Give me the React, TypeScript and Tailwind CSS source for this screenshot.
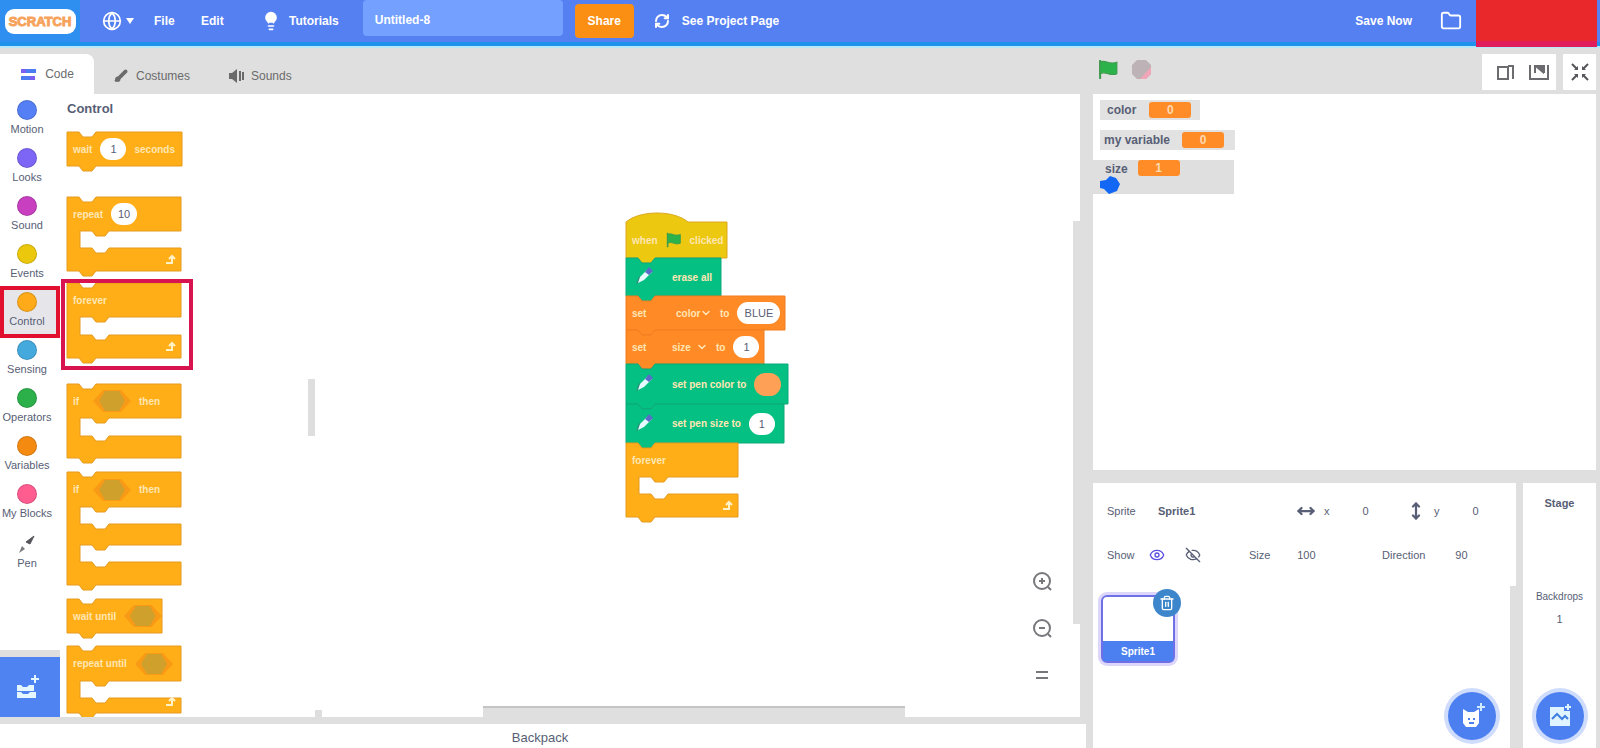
import type { ReactNode } from 'react';
import { ChevronDown, Eye, EyeOff, Folder, Globe, Lightbulb, Brush, Trash2, RefreshCw, MoveHorizontal, MoveVertical } from 'lucide-react';

const categories = [
  { name: 'Motion', color: 'bg-[#5580f5]' },
  { name: 'Looks', color: 'bg-[#7d66f5]' },
  { name: 'Sound', color: 'bg-[#c840c0]' },
  { name: 'Events', color: 'bg-[#ecc80c]' },
  { name: 'Control', color: 'bg-[#ffab19]' },
  { name: 'Sensing', color: 'bg-[#44a9dc]' },
  { name: 'Operators', color: 'bg-[#2cb04a]' },
  { name: 'Variables', color: 'bg-[#f58a10]' },
  { name: 'My Blocks', color: 'bg-[#ff5c90]' },
];

type Tone = 'control' | 'event' | 'data' | 'pen';

const tones: Record<Tone, { fill: string; edge: string }> = {
  control: { fill: '#ffae17', edge: '#e59a20' },
  event: { fill: '#ecc810', edge: '#dba820' },
  data: { fill: '#ff8a26', edge: '#f07c20' },
  pen: { fill: '#04c183', edge: '#0da87a' },
};

interface BlockProps {
  tone: Tone;
  width: number;
  // alternating heights: bar, mouth, bar, mouth, bar
  rows: number[];
  hat?: boolean;
  loop?: boolean;
  children?: ReactNode;
}

const tab = (x: number) => `H${x + 17} l-4 5 h-9 l-4 -5 H${x}`;
const notch = (x: number) => `H${x} l4 5 h9 l4 -5`;

function blockPath(width: number, rows: number[], hat?: boolean) {
  let y = 0;
  let d = hat ? 'M0 0 C14 -12 48 -12 62 0' : `M0 0 ${notch(12)}`;
  d += ` H${width}`;
  rows.forEach((h, i) => {
    y += h;
    if (i % 2 === 0) {
      const last = i === rows.length - 1;
      d += ` V${y} ${last ? `${tab(12)} H0` : `${tab(25)} H13`}`;
    } else {
      d += ` V${y} ${notch(25)} H${width}`;
    }
  });
  return `${d} Z`;
}

function Block({ tone, width, rows, hat, loop, children }: BlockProps) {
  const height = rows.reduce((a, b) => a + b, 0);
  const { fill, edge } = tones[tone];
  return (
    <div className="relative text-[10px] font-bold text-[#ffe6b4]" style={{ width, height }}>
      <svg className="absolute inset-0 overflow-visible" width={width} height={height}>
        <path d={blockPath(width, rows, hat)} fill={fill} stroke={edge} />
        {loop && (
          <g transform={`translate(${width - 16} ${height - 16})`} stroke="#fff1c8" strokeWidth="2" fill="none">
            <path d="M1 8h6V2M4 4l3-3 3 3" />
          </g>
        )}
      </svg>
      <div className="relative flex items-center gap-2 whitespace-nowrap pl-[6px]" style={{ height: rows[0] }}>
        {children}
      </div>
    </div>
  );
}

function Slot({ value, label, wide }: { value: string; label: string; wide?: boolean }) {
  return (
    <input
      aria-label={label}
      defaultValue={value}
      className={`h-[22px] rounded-full bg-white text-center text-[11px] font-normal text-[#575e75] ${wide ? 'w-[43px]' : 'w-[26px]'}`}
    />
  );
}

function Hex() {
  return (
    <svg width="38" height="22" viewBox="0 0 38 22">
      <path d="M10 0h18l10 11-10 11H10L0 11z" fill="#f99a16" />
      <path d="M12 1h14l6 10-6 10H12L6 11z" fill="#cfa02c" />
    </svg>
  );
}

function VarSelect({ value }: { value: string }) {
  return (
    <span className="relative flex items-center">
      <select aria-label="variable" defaultValue={value} className="w-[40px] appearance-none bg-transparent pl-1 text-[10px] font-bold">
        <option>{value}</option>
      </select>
      <ChevronDown className="pointer-events-none absolute right-0 h-3 w-3" strokeWidth={3} />
    </span>
  );
}

function PenIcon() {
  return (
    <svg width="24" height="24" viewBox="0 0 24 24" className="mr-2">
      <path d="M4 19l3-8 4 4z" fill="#2e8f78" />
      <path d="M6 18l2-6 8-8 4 3-8 8z" fill="#e6fbff" />
      <path d="M13 7l4-5 4 4-4 4z" fill="#5a6cc8" />
    </svg>
  );
}

function Flag({ size }: { size: number }) {
  return (
    <svg width={size} height={size} viewBox="0 0 20 20">
      <path d="M2 1v18" stroke="#3f9a4e" strokeWidth="2" />
      <path d="M2 3c5-3 8 3 16 0v11c-7 3-10-3-16 0z" fill="#2bb24a" stroke="#3f9a4e" />
    </svg>
  );
}

function MenuBar() {
  return (
    <header className="relative z-10 flex h-[46px] shrink-0 items-center border-b-4 border-[#1f92ec] bg-[#5580f2] text-[12px] font-bold text-white">
      <a href="#home" aria-label="Home" className="flex h-full w-20 items-center justify-center bg-[#2f8ff0]">
        <svg width="76" height="30" viewBox="0 0 76 30">
          <rect x="3" y="3" width="71" height="25" rx="9" fill="#fff" />
          <text x="38" y="20" textAnchor="middle" fontSize="13" fontWeight="bold" fill="#f7a35c" stroke="#f7a35c" strokeWidth="1">SCRATCH</text>
        </svg>
      </a>
      <button aria-label="Language" className="ml-[22px] flex items-center gap-1">
        <Globe className="h-5 w-5" />
        <svg width="8" height="6"><path d="M0 0h8L4 6z" fill="#fff" /></svg>
      </button>
      <nav className="ml-5 flex items-center">
        <button className="w-[47px] text-left">File</button>
        <button className="w-[60px] text-left">Edit</button>
        <button className="flex items-center gap-2">
          <Lightbulb className="h-5 w-5" fill="#fff" />
          Tutorials
        </button>
      </nav>
      <input
        aria-label="Project title"
        defaultValue="Untitled-8"
        className="mb-1 ml-6 h-9 w-[200px] self-start rounded-sm bg-[#74a0ff] pl-3 pt-1"
      />
      <button className="ml-3 h-[34px] w-[59px] rounded-[4px] bg-[#fb8f14]">Share</button>
      <button className="ml-5 flex items-center gap-3">
        <RefreshCw className="h-4 w-4" strokeWidth={3} />
        See Project Page
      </button>
      <button className="ml-auto">Save Now</button>
      <button aria-label="My Stuff" className="ml-7 mr-[14px]">
        <Folder className="h-[22px] w-[22px]" />
      </button>
      <div className="mr-[3px] h-[47px] w-[121px] self-start border-b-[6px] border-[#e01c5c] bg-[#e8282a]" />
    </header>
  );
}

function Tabs() {
  return (
    <div className="flex h-[46px] shrink-0 items-end text-[12px] text-[#6b6b6b]">
      <button className="flex h-10 w-[94px] items-center justify-center gap-2 rounded-tr-lg bg-white">
        <svg width="17" height="13" viewBox="0 0 17 13">
          <path d="M4 3h12M1 10h12" stroke="#4c7df0" strokeWidth="4" />
          <path d="M1 3h5M10 10h5" stroke="#7a60f0" strokeWidth="4" />
        </svg>
        Code
      </button>
      <button className="flex h-9 w-[113px] items-center gap-2 pl-5">
        <Brush className="h-[14px] w-[14px]" fill="#6b6b6b" />
        Costumes
      </button>
      <button className="flex h-9 items-center gap-[6px] pl-[22px]">
        <svg width="16" height="16" viewBox="0 0 16 16">
          <path d="M0 5h3l5-4v14l-5-4H0z" fill="#6b6b6b" />
          <path d="M11 3v10M14 4v8" stroke="#6b6b6b" strokeWidth="2" />
        </svg>
        Sounds
      </button>
    </div>
  );
}

function CategoryMenu() {
  return (
    <div className="flex w-[60px] shrink-0 flex-col pt-[2px] text-[11px] text-[#575e75]">
      {categories.map(({ name, color }) => (
        <button
          key={name}
          className={`relative flex h-12 flex-col items-center gap-[2px] whitespace-nowrap pr-[6px] pt-1 leading-[14px] ${name === 'Control' ? 'bg-[#e6e6ea]' : ''}`}
        >
          <span className={`h-5 w-5 shrink-0 rounded-full border border-black/15 ${color}`} />
          {name}
          {name === 'Control' && <span className="absolute -bottom-[2px] -top-[2px] left-0 right-0 border-4 border-[#e0102e]" />}
        </button>
      ))}
      <button className="flex h-12 flex-col items-center pr-[6px] pt-1 leading-[14px]">
        <svg width="22" height="24" viewBox="0 0 22 24" className="shrink-0">
          <path d="M3 21l3-7 3 3z" fill="#7b7b80" />
          <path d="M10 10l8-6-4 8z" fill="#55555c" stroke="#55555c" />
        </svg>
        Pen
      </button>
      <button aria-label="Add Extension" className="mt-auto flex h-[67px] w-full items-center justify-center border-t-[7px] border-[#dfdfdf] bg-[#5083f2] pr-[6px]">
        <svg width="24" height="26" viewBox="0 0 24 26">
          <path d="M2 11h4l2 2h4l2-2h5v6H2z M2 18h4l2 2h5l2-2h6v6H2z" fill="#e4f6ff" />
          <path d="M20 1v8M16 5h8" stroke="#e4f6ff" strokeWidth="2" />
        </svg>
      </button>
    </div>
  );
}

function Palette() {
  return (
    <div className="relative flex w-[262px] shrink-0 flex-col overflow-hidden pl-[7px]">
      <h2 className="mb-[14px] mt-[6px] text-[13px] font-bold leading-[18px] text-[#575e75]">Control</h2>
      <Block tone="control" width={115} rows={[34]}>
        wait <Slot value="1" label="seconds" /> seconds
      </Block>
      <div className="mt-[31px]">
        <Block tone="control" width={114} rows={[34, 17, 23]} loop>
          repeat <Slot value="10" label="times" />
        </Block>
      </div>
      <div className="relative mt-3">
        <Block tone="control" width={114} rows={[34, 18, 23]} loop>forever</Block>
        <div className="absolute -bottom-3 -left-[6px] -top-1 w-[132px] border-4 border-[#d81450]" />
      </div>
      <div className="mt-[26px]">
        <Block tone="control" width={114} rows={[34, 18, 22]}>
          <span className="w-3">if</span> <Hex /> then
        </Block>
      </div>
      <div className="mt-[14px]">
        <Block tone="control" width={114} rows={[35, 17, 21, 17, 23]}>
          <span className="w-3">if</span> <Hex /> then
        </Block>
      </div>
      <div className="mt-[14px]">
        <Block tone="control" width={95} rows={[34]}>
          wait until <Hex />
        </Block>
      </div>
      <div className="mt-[13px]">
        <Block tone="control" width={114} rows={[35, 17, 15]} loop>
          repeat until <Hex />
        </Block>
      </div>
      <div className="absolute right-[7px] top-[285px] h-[57px] w-[7px] bg-[#dedede]" />
      <div className="absolute bottom-0 right-0 h-[7px] w-[7px] bg-[#dedede]" />
    </div>
  );
}

function ZoomButton({ label, children }: { label: string; children: ReactNode }) {
  return (
    <button aria-label={label} className="flex h-9 w-9 items-center justify-center rounded-full">
      <svg width="22" height="22" viewBox="0 0 22 22" fill="none" stroke="#77777c" strokeWidth="2">
        {children}
      </svg>
    </button>
  );
}

function Workspace() {
  return (
    <div className="relative min-w-0 flex-1">
      {/* script dropped on the canvas */}
      <div className="absolute left-[304px] top-[128px]">
        <Block tone="event" width={101} rows={[36]} hat>
          when <Flag size={16} /> clicked
        </Block>
        <Block tone="pen" width={95} rows={[38]}>
          <PenIcon /> erase all
        </Block>
        <Block tone="data" width={159} rows={[34]}>
          <span className="w-8">set</span>
          <VarSelect value="color" />
          to <Slot value="BLUE" label="color value" wide />
        </Block>
        <Block tone="data" width={138} rows={[34]}>
          <span className="w-7">set</span>
          <VarSelect value="size" />
          to <Slot value="1" label="size value" />
        </Block>
        <Block tone="pen" width={162} rows={[40]}>
          <PenIcon /> set pen color to
          <button aria-label="Pen color" className="h-[23px] w-[27px] rounded-full bg-[#ffa057]" />
        </Block>
        <Block tone="pen" width={158} rows={[39]}>
          <PenIcon /> set pen size to <Slot value="1" label="pen size" />
        </Block>
        <Block tone="control" width={112} rows={[34, 17, 23]} loop>forever</Block>
      </div>

      <div className="absolute bottom-6 right-5 flex flex-col gap-[11px]">
        <ZoomButton label="Zoom in">
          <circle cx="11" cy="11" r="8" /><path d="M17 17l3 3M8 11h6M11 8v6" />
        </ZoomButton>
        <ZoomButton label="Zoom out">
          <circle cx="11" cy="11" r="8" /><path d="M17 17l3 3M8 11h6" />
        </ZoomButton>
        <ZoomButton label="Reset zoom">
          <path d="M5 8h12M5 14h12" />
        </ZoomButton>
      </div>
      <div className="absolute right-0 top-[127px] h-[403px] w-[7px] bg-[#dfdfdf]" />
      <div className="absolute bottom-0 left-[161px] right-[175px] h-[11px] border-t-2 border-[#c4c4c4] bg-[#dfdfdf]" />
    </div>
  );
}

function Monitor({ name, value }: { name: string; value: string }) {
  return (
    <>
      <span>{name}</span>
      <span className="flex h-4 w-[42px] items-center justify-center rounded-[3px] bg-[#ff8c26] text-[#ffd9b0]">{value}</span>
    </>
  );
}

function Stage() {
  return (
    <section>
      <div className="flex h-[46px] items-end justify-between">
        <div className="flex gap-3 pb-[14px] pl-[5px]">
          <button aria-label="Go"><Flag size={21} /></button>
          <button aria-label="Stop">
            <svg width="21" height="21" viewBox="0 0 21 21">
              <path d="M6 1h9l5 5v9l-5 5H6l-5-5V6z" fill="#bdb3b6" />
              <path d="M20 8v7l-5 5H9z" fill="#f0a5b8" />
            </svg>
          </button>
        </div>
        <div className="mb-1 flex h-9 gap-[7px] text-[#6b6b70]">
          <div className="flex w-[74px] items-center justify-around bg-white pl-2">
            <button aria-label="Small stage">
              <svg width="18" height="16" viewBox="0 0 18 16" fill="none" stroke="currentColor" strokeWidth="2">
                <path d="M1 3h10v12H1zM11 2h5v13" />
              </svg>
            </button>
            <button aria-label="Large stage">
              <svg width="20" height="16" viewBox="0 0 20 16" fill="none" stroke="currentColor" strokeWidth="2">
                <path d="M1 1v14h18V1M6 9V2h9v7" /><path d="M8 3h6v5z" fill="currentColor" />
              </svg>
            </button>
          </div>
          <button aria-label="Full screen" className="flex w-[33px] items-center justify-center bg-white">
            <svg width="18" height="18" viewBox="0 0 18 18" stroke="#55555a" strokeWidth="2">
              <path d="M1 1l5 5M17 1l-5 5M1 17l5-5M17 17l-5-5" />
              <path d="M7 3v4H3zM11 3v4h4zM7 15v-4H3zM11 15v-4h4z" fill="#55555a" stroke="none" />
            </svg>
          </button>
        </div>
      </div>
      <div className="h-[376px] bg-white pt-[6px] text-[12px] font-bold text-[#575e75]">
        <div className="ml-[7px] flex h-5 w-[100px] items-center gap-[13px] bg-[#e2e2e2] pl-[7px]">
          <Monitor name="color" value="0" />
        </div>
        <div className="ml-[7px] mt-[10px] flex h-5 w-[135px] items-center gap-3 bg-[#e2e2e2] pl-1">
          <Monitor name="my variable" value="0" />
        </div>
        <div className="relative mt-[10px] flex h-[34px] w-[141px] items-start gap-[10px] bg-[#dfdfdf] pl-3">
          <Monitor name="size" value="1" />
          <svg className="absolute bottom-0 left-[7px]" width="20" height="18" viewBox="0 0 20 18">
            <path d="M0 5l6-1 4-4 6 2 4 6-3 7-8 3-5-5-4-1z" fill="#1268f5" />
          </svg>
        </div>
      </div>
    </section>
  );
}

function Field({ label, value }: { label: string; value: string }) {
  return (
    <label className="flex items-center">
      <span>{label}</span>
      <input defaultValue={value} className="ml-[18px] w-9 text-center" />
    </label>
  );
}

function SpritePanel() {
  return (
    <section className="relative min-w-0 flex-1 bg-white">
      <div className="flex flex-col text-[11px] text-[#575e75]">
        <div className="flex h-14 items-center pl-[14px]">
          <label className="flex w-[190px] items-center">
            <span className="w-[51px]">Sprite</span>
            <input defaultValue="Sprite1" className="w-20 font-bold" />
          </label>
          <div className="flex w-[110px] items-center gap-[9px]">
            <MoveHorizontal className="h-[18px] w-[18px]" strokeWidth={3} />
            <Field label="x" value="0" />
          </div>
          <div className="flex items-center gap-[9px]">
            <MoveVertical className="h-[18px] w-[18px]" strokeWidth={3} />
            <Field label="y" value="0" />
          </div>
        </div>
        <div className="flex h-8 items-center pl-[14px]">
          <span className="w-[42px]">Show</span>
          <button aria-label="Show sprite" className="mr-5"><Eye className="h-4 w-4 text-[#5a4fe0]" /></button>
          <button aria-label="Hide sprite" className="mr-12"><EyeOff className="h-4 w-4" /></button>
          <div className="w-[133px]"><Field label="Size" value="100" /></div>
          <Field label="Direction" value="90" />
        </div>
      </div>
      <div className="relative ml-2 mt-6 flex h-[68px] w-[74px] flex-col rounded-md border-2 border-[#6f6fe8] shadow-[0_0_0_3px_#dcd6fa]">
        <div className="flex-1" />
        <button className="h-5 bg-[#4c7ff0] text-[10px] font-bold text-white">Sprite1</button>
        <button aria-label="Delete" className="absolute -right-2 -top-2 flex h-7 w-7 items-center justify-center rounded-full bg-[#3d86cc] text-white">
          <Trash2 className="h-4 w-4" />
        </button>
      </div>
      <button aria-label="Choose a Sprite" className="absolute bottom-2 right-5 flex h-12 w-12 items-center justify-center rounded-full bg-[#4c80f0] shadow-[0_0_0_4px_#cfdcfb]">
        <svg width="28" height="28" viewBox="0 0 28 28">
          <path d="M5 7l5 3h6l5-3v14l-3 4H8l-3-4z" fill="#fff" />
          <path d="M10 17h2M15 17h2M11 21h5" stroke="#4c80f0" strokeWidth="2" />
          <path d="M23 1v8M19 5h8" stroke="#d2ecff" strokeWidth="2" />
        </svg>
      </button>
      <div className="absolute bottom-0 right-0 h-[162px] w-[6px] bg-[#dfdfdf]" />
    </section>
  );
}

function StagePanel() {
  return (
    <section className="flex w-[73px] shrink-0 flex-col items-center bg-white text-[11px] text-[#575e75]">
      <h2 className="mt-3 font-bold leading-4">Stage</h2>
      <p className="mt-[78px] text-[10px] leading-4">Backdrops</p>
      <p className="mt-1 leading-5">1</p>
      <button aria-label="Choose a Backdrop" className="mb-2 mt-auto flex h-12 w-12 items-center justify-center rounded-full bg-[#4c80f0] shadow-[0_0_0_4px_#cfdcfb]">
        <svg width="24" height="24" viewBox="0 0 24 24">
          <path d="M2 3h14v4h6v15H2z" fill="#e0f4ff" />
          <path d="M4 15l5-5 5 5 3-3 3 3" stroke="#3f7fe0" strokeWidth="2" fill="none" />
          <path d="M20 0v6M17 3h6" stroke="#e0f4ff" strokeWidth="2" />
        </svg>
      </button>
    </section>
  );
}

export default function App() {
  return (
    <div className="flex h-screen flex-col overflow-hidden bg-[#dfdfdf] font-['Liberation_Sans',sans-serif]">
      <MenuBar />
      <div className="flex min-h-0 flex-1 border-t-2 border-[#b8e8f8]">
        <main className="flex min-w-0 flex-1 flex-col">
          <Tabs />
          <div className="flex min-h-0 flex-1 bg-white">
            <CategoryMenu />
            <Palette />
            <Workspace />
          </div>
          <button className="-mr-[6px] mt-[7px] h-6 shrink-0 bg-white pr-[6px] pt-1 text-[13px] text-[#575e75]">Backpack</button>
        </main>
        <aside className="flex w-[520px] shrink-0 flex-col pl-[13px] pr-1">
          <Stage />
          <div className="mt-[13px] flex min-h-0 flex-1 gap-[7px]">
            <SpritePanel />
            <StagePanel />
          </div>
        </aside>
      </div>
    </div>
  );
}
